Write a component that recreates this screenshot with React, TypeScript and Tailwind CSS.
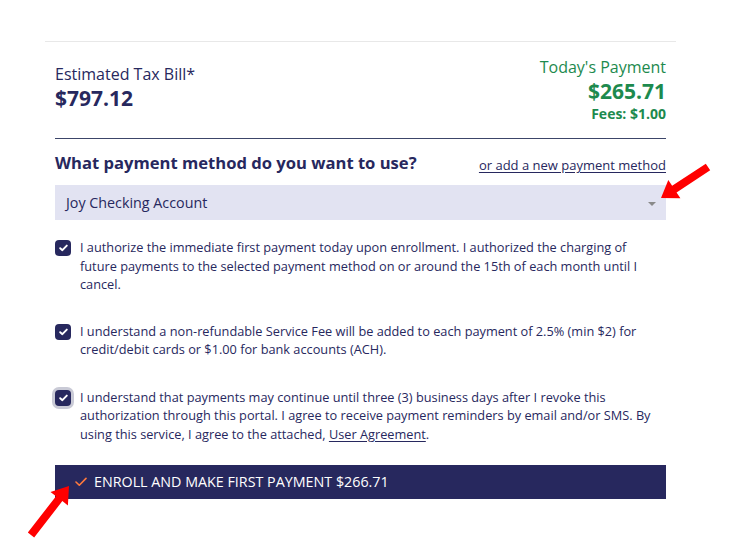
import React, { useState } from 'react';

type Pt = [number, number];

const Checkbox: React.FC<{ checked: boolean; focused?: boolean; onChange: () => void }> = ({
  checked,
  focused = false,
  onChange,
}) => (
  <button
    type="button"
    onClick={onChange}
    className={`mt-[2px] flex h-[16px] w-[16px] shrink-0 items-center justify-center rounded-[4px] bg-[#27285e] ${
      focused ? 'ring-[3px] ring-[#c9cad6]' : ''
    }`}
  >
    {checked && (
      <svg width="9" height="8" viewBox="0 0 9 8" fill="none">
        <path d="M1.2 4.2 L3.4 6.2 L7.8 1.6" stroke="#fff" strokeWidth="1.9" strokeLinecap="round" strokeLinejoin="round" />
      </svg>
    )}
  </button>
);

// polygon for a block arrow from tail to tip
function arrowPoints(tail: Pt, tip: Pt, shaft = 8, head = 22, headLen = 16): string {
  const dx = tip[0] - tail[0];
  const dy = tip[1] - tail[1];
  const len = Math.hypot(dx, dy);
  const ux = dx / len;
  const uy = dy / len;
  const nx = -uy;
  const ny = ux;
  const bx = tip[0] - ux * headLen;
  const by = tip[1] - uy * headLen;
  const pts: Pt[] = [
    [tail[0] + (nx * shaft) / 2, tail[1] + (ny * shaft) / 2],
    [bx + (nx * shaft) / 2, by + (ny * shaft) / 2],
    [bx + (nx * head) / 2, by + (ny * head) / 2],
    tip,
    [bx - (nx * head) / 2, by - (ny * head) / 2],
    [bx - (nx * shaft) / 2, by - (ny * shaft) / 2],
    [tail[0] - (nx * shaft) / 2, tail[1] - (ny * shaft) / 2],
  ];
  return pts.map((p) => p.join(',')).join(' ');
}

const App: React.FC = () => {
  const [checks, setChecks] = useState([true, true, true]);
  const toggle = (i: number) => setChecks((c) => c.map((v, j) => (j === i ? !v : v)));

  return (
    <div className="relative h-[545px] w-[747px] bg-white pt-[41px] font-['Open_Sans',sans-serif] text-[#27285e]">
      <div className="ml-[45px] w-[631px] border-t border-[#e8e8e8] px-[10px] pt-[14px]">
        <div className="flex items-start justify-between border-b border-[#3c4569] pb-[14px]">
          <div className="pt-[7px]">
            <div className="text-[16px] leading-[22px]">Estimated Tax Bill*</div>
            <div className="text-[21px] font-bold leading-[26px]">$797.12</div>
          </div>
          <div className="text-right text-[#1d8a4e]">
            <div className="text-[16px] leading-[22px]">Today's Payment</div>
            <div className="text-[21px] font-bold leading-[26px]">$265.71</div>
            <div className="text-[14px] font-bold leading-[20px]">Fees: $1.00</div>
          </div>
        </div>

        <div className="mt-[13px] flex items-end justify-between">
          <h2 className="text-[16.6px] font-bold leading-[22px]">What payment method do you want to use?</h2>
          <a href="#" className="text-[13px] leading-[18px] underline underline-offset-[2px]">
            or add a new payment method
          </a>
        </div>

        <div className="mt-[11px] flex h-[35px] items-center justify-between bg-[#e2e3f2] pl-[11px] pr-[9px]">
          <span className="text-[14.3px]">Joy Checking Account</span>
          <svg width="10" height="6" viewBox="0 0 10 6" className="mt-[2px]">
            <polygon points="1,1 9,1 5,5" fill="#8a8a8a" />
          </svg>
        </div>

        <div className="mt-[18px] flex flex-col gap-[28px] text-[12.75px] leading-[18.5px]">
          <label className="flex gap-[9px]">
            <Checkbox checked={checks[0]} onChange={() => toggle(0)} />
            <span>
              I authorize the immediate first payment today upon enrollment. I authorized the charging of future
              payments to the selected payment method on or around the 15th of each month until I cancel.
            </span>
          </label>
          <label className="flex gap-[9px]">
            <Checkbox checked={checks[1]} onChange={() => toggle(1)} />
            <span>
              I understand a non-refundable Service Fee will be added to each payment of 2.5% (min $2) for
              credit/debit cards or $1.00 for bank accounts (ACH).
            </span>
          </label>
          <label className="mt-[1px] flex gap-[9px]">
            <Checkbox checked={checks[2]} focused onChange={() => toggle(2)} />
            <p>
              I understand that payments may continue until three (3) business days after I revoke this
              authorization through this portal. I agree to receive payment reminders by email and/or SMS. By using
              this service, I agree to the attached, <u className="underline-offset-[2px]">User Agreement</u>.
            </p>
          </label>
        </div>

        <button
          type="button"
          className="mt-[22px] flex h-[34px] w-full items-center gap-[7px] bg-[#27285e] pl-[20px] text-left text-[14.3px] text-white"
        >
          <svg width="12" height="10" viewBox="0 0 12 10" fill="none">
            <path d="M1 5 L4.3 8.2 L11 1.4" stroke="#ff7a3d" strokeWidth="1.6" strokeLinecap="round" strokeLinejoin="round" />
          </svg>
          ENROLL AND MAKE FIRST PAYMENT $266.71
        </button>
      </div>

      {/* annotation arrows drawn over the page */}
      <svg className="pointer-events-none absolute left-0 top-0" width="747" height="545">
        <polygon points={arrowPoints([708, 167], [661, 198])} fill="#ff0000" />
        <polygon points={arrowPoints([31, 535], [69, 486])} fill="#ff0000" />
      </svg>
    </div>
  );
};

export default App;
